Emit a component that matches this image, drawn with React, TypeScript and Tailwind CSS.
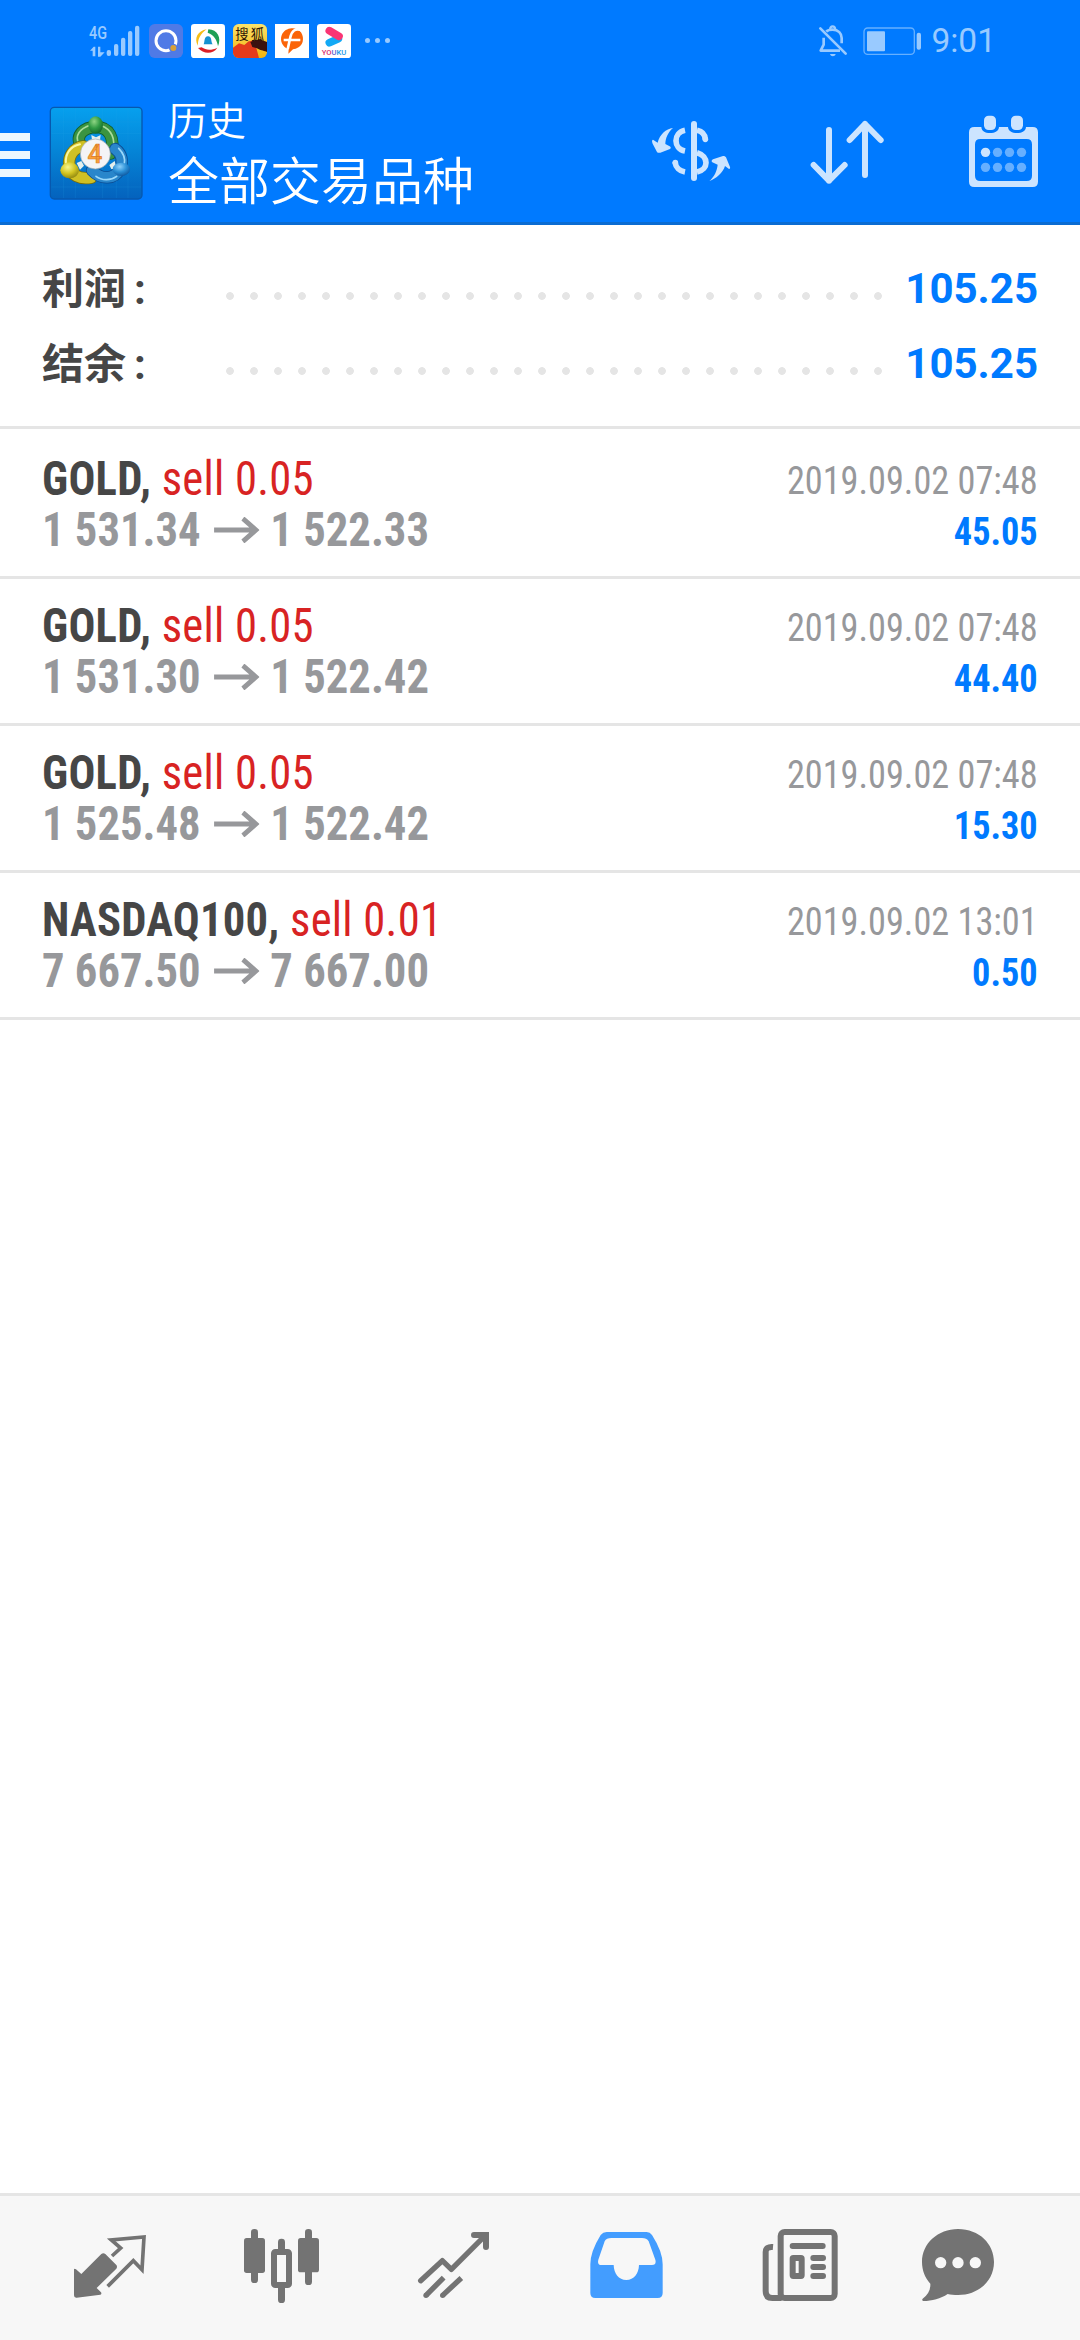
import { FC, ReactElement, ReactNode } from "react";

interface Deal {
    symbol: string;
    side: string;
    open: string;
    close: string;
    time: string;
    profit: string;
}

const deals: Deal[] = [
    { symbol: "GOLD,", side: "sell 0.05", open: "1 531.34", close: "1 522.33", time: "2019.09.02 07:48", profit: "45.05" },
    { symbol: "GOLD,", side: "sell 0.05", open: "1 531.30", close: "1 522.42", time: "2019.09.02 07:48", profit: "44.40" },
    { symbol: "GOLD,", side: "sell 0.05", open: "1 525.48", close: "1 522.42", time: "2019.09.02 07:48", profit: "15.30" },
    { symbol: "NASDAQ100,", side: "sell 0.01", open: "7 667.50", close: "7 667.00", time: "2019.09.02 13:01", profit: "0.50" },
];

const summary = [
    { label: "利润", value: "105.25" },
    { label: "结余", value: "105.25" },
];

const Signal: FC = (): ReactElement => (
    <svg className="h-[40px] w-[54px]" viewBox="24 30 162 120" fill="#99caff">
        <text x="27" y="84" fontSize="53" fontFamily="Roboto" fontWeight="500" textLength="54" lengthAdjust="spacingAndGlyphs">4G</text>
        <path d="M30 119 L41 107 H46 V136 H38 V119Z M54 107 H61 V124 H74 L61 137 H54Z" />
        <rect x="80" y="117" width="13" height="18" rx="6" />
        <rect x="102" y="99" width="13" height="36" rx="6" />
        <rect x="123" y="80" width="13" height="55" rx="6" />
        <rect x="144" y="60" width="13" height="75" rx="6" />
        <rect x="165" y="44" width="13" height="91" rx="6" />
    </svg>
);

const AppBadges: FC = (): ReactElement => (
    <div className="flex gap-[8px]">
        <svg className="size-[34px]" viewBox="0 0 102 102">
            <rect width="102" height="102" rx="17" fill="#4f7ae6" />
            <circle cx="51" cy="50" r="30" fill="none" stroke="#fff" strokeWidth="9" />
            <circle cx="73" cy="72" r="13" fill="#4f7ae6" />
            <circle cx="73" cy="72" r="9" fill="#d9a036" />
        </svg>
        <svg className="size-[34px]" viewBox="0 0 102 102">
            <rect width="102" height="102" rx="10" fill="#fff" />
            <path d="M47 16 C20 20 8 44 21 65 C20 45 28 30 47 16Z" fill="#f6bd16" />
            <path d="M52 16 C80 16 92 42 81 67 C78 48 70 34 50 26Z" fill="#1fa055" />
            <path d="M21 72 C38 92 68 90 79 71 C62 79 46 80 32 70Z" fill="#dc1f26" />
            <path d="M38 61 C42 54 38 38 51 37 C64 38 59 54 65 61Z" fill="#1591d0" />
        </svg>
        <svg className="size-[34px]" viewBox="0 0 102 102">
            <defs>
                <clipPath id="sohu"><rect width="102" height="102" rx="17" /></clipPath>
                <linearGradient id="sohu-bg" x1="0" y1="0" x2="0" y2="1">
                    <stop offset="0" stopColor="#fbe36c" />
                    <stop offset="1" stopColor="#f2b30c" />
                </linearGradient>
            </defs>
            <g clipPath="url(#sohu)">
                <rect width="102" height="102" fill="url(#sohu-bg)" />
                <path d="M0 71 L18 58 L34 63 L47 52 L62 50 L70 72 L78 102 H0Z" fill="#e33a1c" />
                <path d="M52 54 L66 48 L84 47 L102 54 V84 C88 78 84 80 70 72 L58 69Z" fill="#3a1210" />
                <text x="7" y="46" fontSize="40" textLength="86" fontFamily="'Noto Sans CJK SC', sans-serif" fill="#2a1205">搜狐</text>
            </g>
        </svg>
        <svg className="size-[34px]" viewBox="0 0 102 102">
            <rect width="102" height="102" fill="#fff" />
            <path d="M50 13 C76 12 88 34 83 53 C79 68 64 74 54 76 L40 89 L41 76 C22 70 14 50 20 34 C26 20 37 14 50 13Z" fill="#fb6408" />
            <path d="M82 20 C60 10 50 22 46 40 L38 76 M26 48 H76" fill="none" stroke="#fff" strokeWidth="8" />
        </svg>
        <svg className="size-[34px]" viewBox="0 0 102 102">
            <rect width="102" height="102" rx="10" fill="#fff" />
            <path d="M37 56 L64 44" stroke="#12a9f5" strokeWidth="23" strokeLinecap="round" />
            <path d="M37 20 L66 37" stroke="#fa3474" strokeWidth="23" strokeLinecap="round" />
            <text x="14" y="92" fontSize="19" fontFamily="Roboto" fontWeight="500" textLength="74" lengthAdjust="spacingAndGlyphs" fill="#d8306e">
                YO<tspan fill="#5b62cf">U</tspan><tspan fill="#2199e8">KU</tspan>
            </text>
        </svg>
    </div>
);

const StatusBar: FC = (): ReactElement => (
    <div className="flex h-[81px] items-center pr-[84px] pl-[88px]">
        <Signal />
        <div className="ml-[7px]">
            <AppBadges />
        </div>
        <div className="ml-[14px] flex gap-[5px]">
            <span className="size-[5px] rounded-full bg-[#99caff]" />
            <span className="size-[5px] rounded-full bg-[#99caff]" />
            <span className="size-[5px] rounded-full bg-[#99caff]" />
        </div>
        <svg className="ml-auto h-[36px] w-[30px]" viewBox="54 36 90 108" fill="none" stroke="#99caff" strokeWidth="8">
            <path d="M71 80 V101 L62 119 H120 M79 62 C83 57 90 56 98 56 C115 56 125 67 125 81 V97" strokeLinejoin="round" />
            <path d="M61 52 L137 128" strokeLinecap="round" />
            <path d="M91 56 C88 43 108 43 105 56" strokeWidth="7" />
            <path d="M90 129 H107 C105 138 92 138 90 129Z" fill="#99caff" stroke="none" />
        </svg>
        <svg className="ml-[15px] h-[30px] w-[60px]" viewBox="188 46 180 90" fill="#99caff">
            <rect x="191" y="52" width="151" height="79" rx="11" fill="none" stroke="#66b0ff" strokeWidth="4" />
            <rect x="200" y="62" width="54" height="60" rx="3" />
            <rect x="349" y="66" width="13" height="51" rx="6" />
        </svg>
        <span className="ml-[8px] font-[Roboto] text-[33.500px] leading-[40px] text-[#99caff]">9:01</span>
    </div>
);

const Logo: FC = (): ReactElement => (
    <svg className="h-[94px] w-[94px]" viewBox="147 47 282 282">
        <defs>
            <linearGradient id="tile" x1="0" y1="0" x2="0" y2="1">
                <stop offset="0" stopColor="#06a0ee" />
                <stop offset="0.45" stopColor="#0586d8" />
                <stop offset="1" stopColor="#0462bd" />
            </linearGradient>
            <radialGradient id="green" cx="0.4" cy="0.3" r="0.8">
                <stop offset="0" stopColor="#8fd583" />
                <stop offset="0.5" stopColor="#2f9a43" />
                <stop offset="1" stopColor="#0e5a24" />
            </radialGradient>
            <radialGradient id="yellow" cx="0.4" cy="0.3" r="0.8">
                <stop offset="0" stopColor="#f8f58c" />
                <stop offset="0.5" stopColor="#d3c522" />
                <stop offset="1" stopColor="#81790d" />
            </radialGradient>
            <radialGradient id="blue" cx="0.4" cy="0.3" r="0.8">
                <stop offset="0" stopColor="#8fd2fb" />
                <stop offset="0.5" stopColor="#2a8fd6" />
                <stop offset="1" stopColor="#0b4c93" />
            </radialGradient>
        </defs>
        <rect x="151" y="51" width="275" height="275" rx="12" fill="url(#tile)" stroke="#0758ae" strokeWidth="4" />
        <path d="M191 54 V323 M226 54 V323 M308 54 V323 M349 54 V323 M384 54 V323 M154 95 H423 M154 130 H423 M154 290 H423" stroke="#2ba6ee" strokeWidth="1.5" opacity="0.3" fill="none" />
        {/* three rings, then the figures' heads on top of them */}
        <g fill="none" strokeLinecap="round">
            <path d="M242 164 C224 136 252 110 288 110 C328 110 346 144 332 190" stroke="#14602a" strokeWidth="37" />
            <path d="M242 164 C224 136 252 110 288 110 C328 110 346 144 332 190" stroke="#3a9441" strokeWidth="32" />
            <path d="M233 152 C226 128 250 108 280 102 M304 106 C334 116 348 146 338 182" stroke="#a9dc9b" strokeWidth="5" />
            <path d="M250 168 C220 172 204 198 208 226 C214 256 238 268 274 262" stroke="#756d0c" strokeWidth="37" />
            <path d="M250 168 C220 172 204 198 208 226 C214 256 238 268 274 262" stroke="#cfc024" strokeWidth="32" />
            <path d="M240 162 C210 168 195 192 198 218" stroke="#fbf6a0" strokeWidth="6" />
            <path d="M346 176 C366 190 370 214 360 236 C344 268 304 270 276 240" stroke="#0b4c93" strokeWidth="37" />
            <path d="M346 176 C366 190 370 214 360 236 C344 268 304 270 276 240" stroke="#2986cb" strokeWidth="32" />
            <path d="M356 174 C372 190 376 204 373 220 M288 258 C306 272 334 270 350 258" stroke="#9bd8fa" strokeWidth="5" />
        </g>
        <path d="M274 134 L288 141 L302 134 L300 150 H276Z M230 218 L244 212 L252 226 L240 238Z M328 224 L344 212 L350 236 L334 236Z" fill="#e4efec" />
        <ellipse cx="287" cy="104" rx="22" ry="26" fill="url(#green)" />
        <ellipse cx="209" cy="240" rx="28" ry="24" fill="url(#yellow)" />
        <ellipse cx="364" cy="237" rx="26" ry="20" fill="url(#blue)" />
        <circle cx="286" cy="191" r="45" fill="#f4f4f6" stroke="#9aa7ad" strokeWidth="2" />
        <text x="285" y="218" textAnchor="middle" fontSize="78" fontFamily="Roboto" fontWeight="500" fill="#f9a13a" stroke="#dc7a26" strokeWidth="2">4</text>
    </svg>
);

const Header: FC = (): ReactElement => (
    <header className="h-[225px] border-b-[3px] border-[#0b6cd2] bg-[#007aff]">
        <StatusBar />
        <div className="flex h-[141px]">
            <div className="mt-[52px] flex w-[30px] flex-col gap-[10px]">
                <span className="h-[8px] bg-[#ebf7ff]" />
                <span className="h-[8px] bg-[#ebf7ff]" />
                <span className="h-[8px] bg-[#ebf7ff]" />
            </div>
            <div className="mt-[25px] ml-[19px]">
                <Logo />
            </div>
            <div className="mt-[13px] ml-[25px] font-['Noto_Sans_CJK_SC',sans-serif] font-[350] text-white">
                <div className="text-[39px] leading-[48px]">历史</div>
                <div className="text-[51px] leading-[72px]">全部交易品种</div>
            </div>
            <div className="mt-[25px] mr-[32px] ml-auto flex">
                {/* currency, sort, calendar */}
                <svg className="mr-[66px] h-[90px] w-[90px]" viewBox="45 18 270 270" fill="#cce4ff">
                    <rect x="180" y="63" width="18" height="180" rx="9" />
                    <path d="M162 91 C126 98 126 146 162 153 M132 186 C134 202 146 213 162 216" fill="none" stroke="#cce4ff" strokeWidth="17" />
                    <circle cx="133" cy="188" r="8.5" />
                    <path d="M198 91 C212 94 222 104 223 118 M198 158 C234 168 234 209 198 216" fill="none" stroke="#cce4ff" strokeWidth="17" />
                    <circle cx="223" cy="118" r="8.5" />
                    <path d="M126 84 C105 86 86 104 80 128 L66 119 C61 121 64 127 65 131 L78 156 C80 159 84 159 88 158 L117 147 C121 144 119 140 116 139 L103 132 C103 114 112 96 126 84Z" />
                    <path d="M235 243 C256 236 276 218 282 198 L294 207 C297 207 298 204 297 201 L285 172 C283 169 280 168 276 168 L246 178 C241 181 241 185 244 187 L260 194 C258 213 250 230 235 243Z" />
                </svg>
                <svg className="mr-[66px] h-[90px] w-[90px]" viewBox="513 18 270 270" fill="none" stroke="#cce4ff" strokeWidth="18" strokeLinecap="round" strokeLinejoin="round">
                    <path d="M594 90 V242 M548 195 L594 242 L641 195" />
                    <path d="M702 225 V72 M656 120 L702 72 L749 120" />
                </svg>
                <svg className="h-[90px] w-[90px]" viewBox="981 18 270 270" fill="#cce4ff">
                    <path fillRule="evenodd" d="M1030 81 H1051 C1052 94 1062 99 1077 99 C1092 99 1103 94 1104 81 H1131 C1132 94 1143 99 1158 99 C1173 99 1184 94 1185 81 H1205 Q1221 81 1221 97 V245 Q1221 261 1205 261 H1030 Q1014 261 1014 245 V97 Q1014 81 1030 81Z M1048 117 Q1032 117 1032 133 V227 Q1032 243 1048 243 H1187 Q1203 243 1203 227 V133 Q1203 117 1187 117Z" />
                    <rect x="1059" y="47" width="36" height="43" rx="14" />
                    <rect x="1140" y="47" width="36" height="43" rx="14" />
                    <circle cx="1063.500" cy="157" r="14" />
                    <g fill="#66afff">
                        <circle cx="1099.500" cy="157" r="14" />
                        <circle cx="1135.500" cy="157" r="14" />
                        <circle cx="1171.500" cy="157" r="14" />
                        <circle cx="1063.500" cy="202" r="14" />
                        <circle cx="1099.500" cy="202" r="14" />
                        <circle cx="1135.500" cy="202" r="14" />
                        <circle cx="1171.500" cy="202" r="14" />
                    </g>
                </svg>
            </div>
        </div>
    </header>
);

const DealRow: FC<{ deal: Deal }> = ({ deal }): ReactElement => (
    <li className="flex h-[147px] justify-between border-b-[3px] border-[#e5e5e5] px-[42px] font-['Roboto_Condensed',Roboto] [font-stretch:75%]">
        <div className="origin-left scale-x-[0.93] pt-[21px] text-[48px] leading-[51px] font-bold whitespace-nowrap">
            <div className="tracking-[0.27px] text-[#464646]">
                {deal.symbol} <span className="font-normal text-[#d82323]">{deal.side}</span>
            </div>
            <div className="flex items-center text-[#97989b]">
                {deal.open}
                <svg className="mr-[12px] ml-[14px] h-[26px] w-[49px]" viewBox="0 0 49 26" fill="none" stroke="#97989b" strokeWidth="5">
                    <path d="M0 13 H45 M31 1.500 L45 13 L31 24.500" />
                </svg>
                {deal.close}
            </div>
        </div>
        <div className="origin-right scale-x-[0.93] pt-[24px] text-right text-[39px] leading-[51px] whitespace-nowrap">
            <div className="text-[#97989b]">{deal.time}</div>
            <div className="font-bold text-[#007aff]">{deal.profit}</div>
        </div>
    </li>
);

const Tab: FC<{ viewBox: string; children: ReactNode }> = ({ viewBox, children }): ReactElement => (
    <button className="flex w-[172px] justify-center pt-[24px]">
        <svg className="size-[96px]" viewBox={viewBox} fill="#737373">
            {children}
        </svg>
    </button>
);

const TabBar: FC = (): ReactElement => (
    <nav className="flex h-[147px] border-t-[3px] border-[#e5e5e5] bg-[#f7f7f7] pl-[24px]">
        <Tab viewBox="66 120 288 288">
            <path d="M102 268 Q104 264 108 268 L124 282 L184 222 Q190 217 196 222 L229 255 Q233 260 229 266 L170 324 L183 337 Q186 342 181 344 L110 353 Q102 354 102 346Z" />
            <path d="M216 228 L242 204 L214 180 L312 171 L306 269 L280 242 L203 319" fill="none" stroke="#737373" strokeWidth="11" />
        </Tab>
        <Tab viewBox="582 120 288 288">
            <rect x="633" y="147" width="21" height="162" rx="10" />
            <rect x="612" y="174" width="63" height="105" rx="8" />
            <rect x="795" y="147" width="21" height="168" rx="10" />
            <rect x="774" y="174" width="63" height="103" rx="8" />
            <rect x="714" y="176" width="21" height="50" rx="10" />
            <rect x="714" y="310" width="21" height="59" rx="10" />
            <rect x="702" y="216" width="45" height="99" rx="4" fill="#f7f7f7" stroke="#737373" strokeWidth="18" />
        </Tab>
        <Tab viewBox="1098 120 288 288">
            <g fill="none" stroke="#737373" strokeWidth="16">
                <path d="M1142 302 L1207 242 L1234 268 L1336 166" strokeLinecap="round" strokeLinejoin="round" />
                <path d="M1302 165 H1338 V201" strokeWidth="18" strokeLinecap="round" />
                <path d="M1158 346 L1211 293 M1208 346 L1264 294" />
            </g>
            <circle cx="1158" cy="346" r="8" />
            <circle cx="1208" cy="346" r="8" />
        </Tab>
        <Tab viewBox="54 120 288 288">
            <path fill="#439dff" fillRule="evenodd" d="M140 156 H260 Q270 156 276 165 Q308 215 308 253 V339 Q308 354 293 354 H106 Q91 354 91 339 V253 Q91 215 122 165 Q129 156 140 156Z M154 174 Q139 174 134 184 L115 239 Q111 255 124 255 H161 C162 281 176 300 199 300 C222 300 236 281 237 255 H276 Q290 255 286 239 L266 184 Q260 174 246 174Z" />
        </Tab>
        <Tab viewBox="570 120 288 288">
            <g fill="none" stroke="#737373" strokeWidth="18">
                <rect x="662" y="156" width="162" height="198" rx="12" />
                <path d="M639 201 Q617 199 617 216 V333 Q617 354 637 354 H665" />
                <path d="M698 198 H788 M760 234 H789 M760 261 H789 M760 288 H789" strokeLinecap="round" />
                <rect x="698" y="234" width="27" height="54" rx="2" />
            </g>
        </Tab>
        <Tab viewBox="1086 120 288 288">
            <path d="M1194 147 C1258 147 1302 192 1302 246 C1302 304 1254 345 1194 345 C1182 345 1172 344 1163 342 C1142 356 1116 363 1090 363 Q1084 361 1088 356 C1104 344 1112 330 1111 311 C1094 292 1086 270 1086 246 C1086 190 1134 147 1194 147Z" />
            <g fill="#f7f7f7">
                <circle cx="1142" cy="248" r="17" />
                <circle cx="1194" cy="248" r="17" />
                <circle cx="1246" cy="248" r="17" />
            </g>
        </Tab>
    </nav>
);

export default function App() {
    return (
        <div className="flex h-[2340px] w-[1080px] flex-col overflow-hidden bg-white">
            <Header />
            <section className="h-[204px] border-b-[3px] border-[#e5e5e5] px-[42px] pt-[25px]">
                {summary.map((item) => (
                    <div key={item.label} className="flex h-[75px] items-center text-[42px] font-bold">
                        <span className="w-[176px] font-['Noto_Sans_CJK_SC',sans-serif] leading-[75px] text-[#464646]">
                            {item.label}
                            <span className="ml-[8px] font-[Roboto]">:</span>
                        </span>
                        <span className="mt-[17px] h-[8px] w-[672px] bg-[radial-gradient(circle,#e5e5e5_3.5px,transparent_4.2px)] bg-[length:24px_8px]" />
                        <span className="mt-[2px] ml-auto font-[Roboto] text-[#007aff]">{item.value}</span>
                    </div>
                ))}
            </section>
            <ul className="flex-1 pt-[3px]">
                {deals.map((deal, i) => (
                    <DealRow key={i} deal={deal} />
                ))}
            </ul>
            <TabBar />
        </div>
    );
}
